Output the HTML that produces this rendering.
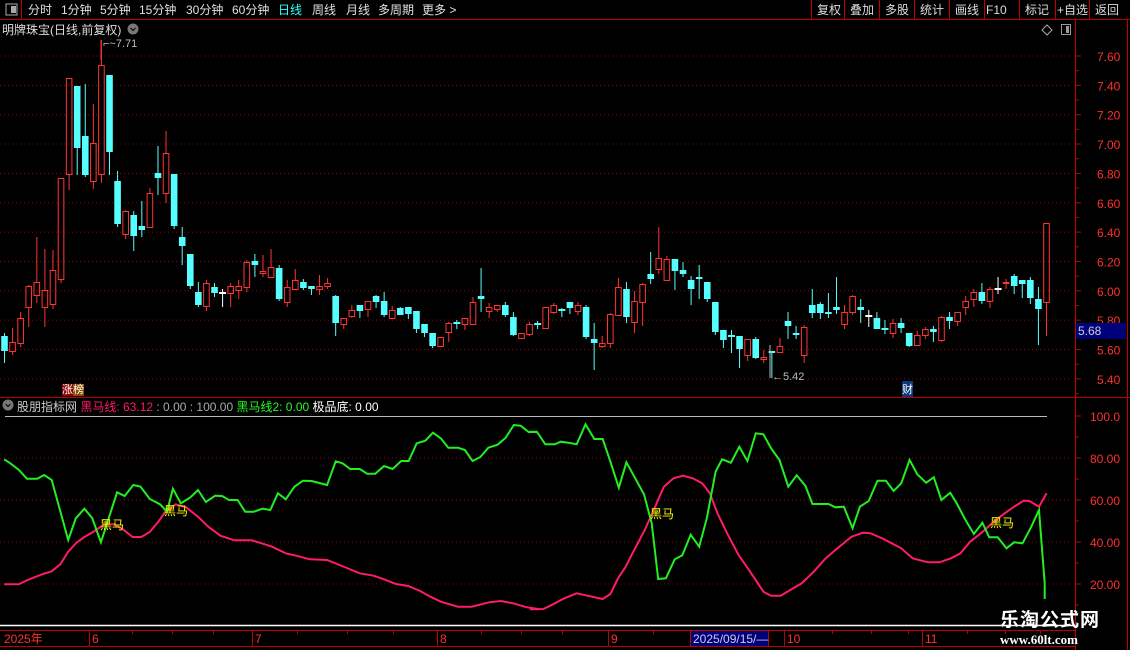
<!DOCTYPE html>
<html><head><meta charset="utf-8"><style>
*{margin:0;padding:0;box-sizing:border-box}
body{width:1130px;height:650px;background:#000;overflow:hidden;position:relative;font-family:"Liberation Sans","Noto Sans CJK SC",sans-serif;font-size:12px;color:#ddd}
.a{position:absolute;white-space:nowrap}
svg{position:absolute;left:0;top:0}
</style></head><body>
<svg id="s" width="1130" height="650" xmlns="http://www.w3.org/2000/svg"></svg>

<div class="a" style="left:2px;top:21px;color:#ddd;font-size:12px">明牌珠宝(日线,前复权)</div>
<div class="a" style="left:103px;top:38px;color:#bbb;font-size:11px">⌐~7.71</div>
<div class="a" style="left:772px;top:371px;color:#bbb;font-size:11px">←5.42</div>
<div class="a" style="left:62px;top:381px;font-size:11px;color:#fff"><span style="background:#8b0000">涨</span><span style="background:#8b4a00">榜</span></div>
<div class="a" style="left:902px;top:381px;font-size:11px;color:#fff;background:#0a3a7a">财</div>
<div class="a" style="left:17px;top:398px;font-size:12px;color:#ccc">股朋指标网 <span style="color:#ff1a6a">黑马线: 63.12</span> <span style="color:#aaa">: 0.00 : 100.00</span> <span style="color:#22ff22">黑马线2: 0.00</span> <span style="color:#fff">极品底: 0.00</span></div>
<div class="a" style="left:100px;top:516px;color:#ffff00;font-size:12px">黑马</div>
<div class="a" style="left:164px;top:502px;color:#ffff00;font-size:12px">黑马</div>
<div class="a" style="left:650px;top:505px;color:#ffff00;font-size:12px">黑马</div>
<div class="a" style="left:990px;top:514px;color:#ffff00;font-size:12px">黑马</div>
<div class="a" style="left:1000px;top:605px;color:#fff;font-size:19px;font-weight:bold;letter-spacing:1px">乐淘公式网</div>
<div class="a" style="left:1000px;top:632px;color:#fff;font-size:13px;font-weight:bold;font-family:'Liberation Serif',serif">www.60lt.com</div>
<div class="a" style="left:1076px;top:323px;width:50px;height:16px;background:#00007a;color:#ccd;font-size:12px;padding-left:2px;line-height:16px">5.68</div>

<script>
var s=document.getElementById('s'),h='';
function L(x1,y1,x2,y2,c,w,d){h+='<line x1="'+x1+'" y1="'+y1+'" x2="'+x2+'" y2="'+y2+'" stroke="'+c+'" stroke-width="'+(w||1)+'"'+(d?' stroke-dasharray="'+d+'"':'')+'/>';}
function R(x,y,w,hh,f,st){h+='<rect x="'+x+'" y="'+y+'" width="'+w+'" height="'+hh+'" fill="'+f+'"'+(st?' stroke="'+st+'"':'')+'/>';}
function T(x,y,t,c,sz){h+='<text x="'+x+'" y="'+y+'" fill="'+c+'" font-size="'+(sz||12)+'" font-family="Liberation Sans,Noto Sans CJK SC,sans-serif">'+t+'</text>';}
var RED='#c00000';
// top bar
L(0,19.5,1130,19.5,RED);L(21.5,0,21.5,19,RED);
R(6,4,11,11,'#000','#aaa');R(11,6,5,7,'#aaa');
var mx=[28,61,100,139,186,232,278,312,346,378,422],mt=['分时','1分钟','5分钟','15分钟','30分钟','60分钟','日线','周线','月线','多周期','更多 &gt;'];
for(var i=0;i<mx.length;i++)T(mx[i],14,mt[i],i==6?'#33ffff':'#e0e0e0',12);
var bx=[811,844,879,914,949,984,1019,1055,1089],bt=['复权','叠加','多股','统计','画线','F10','标记','+自选','返回'];
for(i=0;i<bx.length;i++){L(bx[i]+.5,0,bx[i]+.5,19,RED);T(bx[i]+(bt[i].length>2?2:6),14,bt[i],'#ddd',12);}
// second row icons
h+='<circle cx="133" cy="29" r="5.5" fill="#777"/><path d="M130.5 28l2.5 2.5 2.5-2.5" stroke="#000" fill="none"/>';
h+='<path d="M1047 25l5 5-5 5-5-5z" stroke="#aaa" fill="none"/>';R(1061.5,24.5,9,10,'#000','#999');R(1066,26,3,7,'#999');
// axis separators
L(1075.5,20,1075.5,650,RED);L(1127.5,20,1127.5,650,RED);
L(0,397.5,1130,397.5,RED);
// price grid
var pl=['7.60','7.40','7.20','7.00','6.80','6.60','6.40','6.20','6.00','5.80','5.60','5.40'];
for(var k=0;k<12;k++){var y=56+k*29.35;L(0,y,1072,y,'#900','1','1 3');L(1076,y,1081,y,RED);L(1076,y+14.7,1079,y+14.7,RED);T(1097,y+5,pl[k],'#ff3030',12);}
// candles
var C=[[336,351,333,363,0],[342,351,328,355,1],[318,343,312,347,1],[286,307,285,327,1],[282,295,237,303,1],[290,307,249,327,1],[270,304,250,309,1],[178,279,178,283,1],[78,174,78,190,1],[86,148,86,175,0],[136,175,84,177,0],[143,181,104,189,1],[65,174,40,183,1],[75,152,75,175,0],[181,224,171,227,0],[211,234,210,239,1],[215,236,211,251,0],[226,230,201,237,0],[193,227,188,227,1],[173,178,146,195,0],[153,193,131,203,1],[174,226,174,229,0],[237,246,227,265,0],[254,286,254,289,0],[292,305,282,307,0],[283,306,280,311,1],[287,293,283,297,0],[293,293,289,307,2],[286,293,283,307,1],[286,290,280,299,1],[262,287,260,292,1],[261,265,254,277,0],[271,273,255,277,1],[267,277,249,277,1],[268,299,265,301,0],[287,302,280,307,1],[280,289,269,289,1],[282,288,279,290,0],[286,289,286,295,0],[286,289,275,295,1],[283,286,278,289,1],[296,323,295,336,0],[318,324,318,329,1],[310,316,305,318,1],[305,311,305,318,0],[301,309,301,317,1],[296,302,295,308,0],[301,315,292,317,0],[310,318,306,318,1],[308,315,307,315,0],[307,314,307,319,0],[311,329,311,333,0],[324,333,324,337,0],[333,346,333,348,0],[337,346,337,346,1],[323,332,322,342,1],[323,323,320,329,0],[318,324,318,330,1],[302,324,297,324,1],[296,299,268,312,0],[307,311,303,318,1],[305,309,305,312,1],[305,315,302,317,0],[317,335,312,336,0],[333,338,333,339,1],[324,334,322,336,1],[324,324,321,329,0],[307,328,307,328,1],[305,312,303,314,1],[310,310,308,317,0],[302,308,302,314,0],[305,311,302,315,1],[307,337,305,339,0],[339,343,323,370,0],[343,346,336,348,1],[314,343,313,348,1],[287,315,278,315,1],[289,317,282,323,0],[301,322,291,333,1],[284,302,283,326,1],[274,279,252,284,0],[258,269,227,274,1],[259,280,256,280,1],[259,271,259,290,0],[270,274,262,277,0],[280,289,276,305,0],[277,279,265,299,0],[282,299,282,302,0],[302,332,302,335,0],[330,340,330,348,0],[336,336,330,353,0],[336,349,336,368,0],[339,355,339,361,1],[339,358,337,359,0],[357,359,350,363,1],[351,353,351,378,0],[346,352,338,353,1],[321,326,312,339,0],[333,335,326,339,0],[327,355,325,363,1],[305,313,289,318,0],[304,313,302,319,0],[312,314,293,318,0],[307,310,277,314,0],[312,324,305,329,1],[296,312,295,315,1],[307,310,299,323,0],[316,316,310,327,2],[318,329,312,329,0],[329,329,320,334,0],[323,333,319,338,1],[323,328,318,333,0],[333,346,333,347,0],[335,345,331,345,1],[329,335,327,339,1],[329,332,326,342,0],[317,340,316,342,1],[317,321,312,329,0],[312,321,312,326,1],[301,307,296,315,1],[292,299,289,307,1],[292,301,283,304,0],[289,301,287,308,1],[289,289,277,294,2],[282,283,279,289,1],[276,286,274,294,0],[280,284,280,298,0],[280,298,277,304,0],[299,309,287,345,0],[223,302,223,336,1]];
var n=C.length,sp=(1046.5-4.5)/(n-1);
for(i=0;i<n;i++){var c=C[i],cx=4.5+i*sp,col=c[4]==1?'#ff3333':(c[4]==2?'#fff':'#55ffff');
 var bt0=Math.min(c[0],c[1]),bb=Math.max(c[0],c[1]);
 if(c[4]==1){L(cx,c[2],cx,bt0,col);L(cx,bb,cx,c[3],col);if(bb-bt0<1){L(cx-3,bt0,cx+3,bt0,col)}else h+='<rect x="'+(cx-2.8)+'" y="'+(bt0+.5)+'" width="5.6" height="'+(bb-bt0)+'" fill="none" stroke="'+col+'"/>';}
 else{L(cx,c[2],cx,c[3],col);if(bb-bt0<2)L(cx-3.5,bt0,cx+3.5,bt0,col,2);else R(cx-3.3,bt0,6.6,bb-bt0,col);}
}
L(770,345,770,378,'#bbb');L(101,40,101,60,'#ff3333');
// indicator
L(5,416.5,1047,416.5,'#bbb');
var il=['100.0','80.00','60.00','40.00','20.00'];
for(k=0;k<5;k++){var y=416+k*42;if(k>0)L(0,y,1072,y,'#900','1','1 3');L(1076,y,1081,y,RED);L(1076,y+21,1079,y+21,RED);T(1090,y+5,il[k],'#ff3030',12);}
function P(a,sx,ox){var p='';for(var j=0;j<a.length;j+=2)p+=(ox+a[j]/sx).toFixed(1)+','+(410+a[j+1]/3).toFixed(1)+' ';return p;}
var g1=[12,148,30,160,55,180,78,206,108,206,128,195,150,210,198,390,220,325,245,296,268,325,293,397,340,247,362,258,387,225,408,230,435,267,465,283,485,305,502,236,525,280,553,262,575,240,598,276,625,257,645,258,665,270,690,270,712,305,737,305,762,296,785,300,807,250,830,268,855,230,880,212,905,213,950,225,975,154,995,160,1017,177,1045,177,1066,191,1090,191,1115,168,1140,177,1165,153,1187,153,1210,100,1235,92,1257,68,1280,85,1302,113,1330,113,1350,120,1372,153,1395,141,1418,113,1445,104,1468,84,1492,45,1512,47,1535,66,1560,66];
var g2=[0,65,18,65,40,103,65,103,80,95,100,98,122,103,145,43,168,87,190,87,210,155,232,233,252,157,275,205,298,253,318,340,335,507,355,505,378,448,398,436,420,374,442,410,462,325,485,185,502,148,525,158,547,110,568,153,590,70,610,73,630,115,652,150,675,230,697,196,720,228,738,282,780,282,798,292,820,290,843,355,862,290,885,273,908,212,930,212,950,243,970,220,992,150,1012,193,1035,218,1055,202,1075,270,1098,248,1115,280,1138,330,1160,372,1182,338,1200,382,1222,382,1245,415,1265,397,1287,400,1310,350,1330,300,1345,520,1345,567];
var p1=[12,523,55,523,80,510,100,502,125,492,150,484,175,463,198,425,222,398,245,381,270,366,300,345,330,343,355,356,385,381,410,381,435,366,460,335,480,305,510,283,540,292,575,320,605,350,640,377,680,391,730,391,760,400,790,410,830,430,860,437,900,448,950,450,1000,471,1045,490,1085,497,1115,508,1150,522,1185,528,1220,543,1250,560,1280,575,1330,590,1370,590,1420,577,1455,573,1490,580,1530,592,1568,598];
var p2=[0,598,35,597,60,583,90,565,122,550,150,557,190,567,210,552,230,505,250,470,270,425,300,360,330,282,350,230,375,205,400,197,425,205,450,220,470,250,490,310,515,370,545,435,575,485,610,545,630,557,655,557,680,540,710,520,740,487,770,448,800,418,840,380,870,368,890,370,920,385,970,415,1000,445,1040,457,1070,457,1100,445,1125,430,1150,395,1180,368,1210,337,1240,310,1265,290,1290,272,1305,273,1330,290,1350,250];
h+='<polyline fill="none" stroke="#ff1a6a" stroke-width="2" points="'+P(p1,2.904,0)+P(p2,2.613,530)+'"/>';
h+='<polyline fill="none" stroke="#22ee22" stroke-width="2" points="'+P(g1,2.904,0)+P(g2,2.613,530)+'"/>';
h+='<circle cx="8" cy="405" r="5.5" fill="#777"/><path d="M5.5 404l2.5 2.5 2.5-2.5" stroke="#000" fill="none"/>';
// bottom
L(0,625.5,1075,625.5,'#fff',1.5);
L(0,630.5,1075,630.5,RED);L(0,646.5,1075,646.5,RED);
var dl=[[4,'2025年'],[92,'6'],[255,'7'],[440,'8'],[611,'9'],[787,'10'],[925,'11']];
for(k=0;k<dl.length;k++){if(k>0)L(dl[k][0]-2.5,631,dl[k][0]-2.5,646,RED);T(dl[k][0],643,dl[k][1],'#ff3030',12);}
[132,172,213,297,347,393,481,521,562,653,747,832,871,908,967,1005,1040].forEach(function(x){L(x+.5,631,x+.5,634,RED);});
R(690,631,78,15,'#00007a');L(690.5,631,690.5,646,RED);L(768.5,631,768.5,646,RED);T(693,643,'2025/09/15/—','#ccd',12);
s.innerHTML=h;
</script>
</body></html>
